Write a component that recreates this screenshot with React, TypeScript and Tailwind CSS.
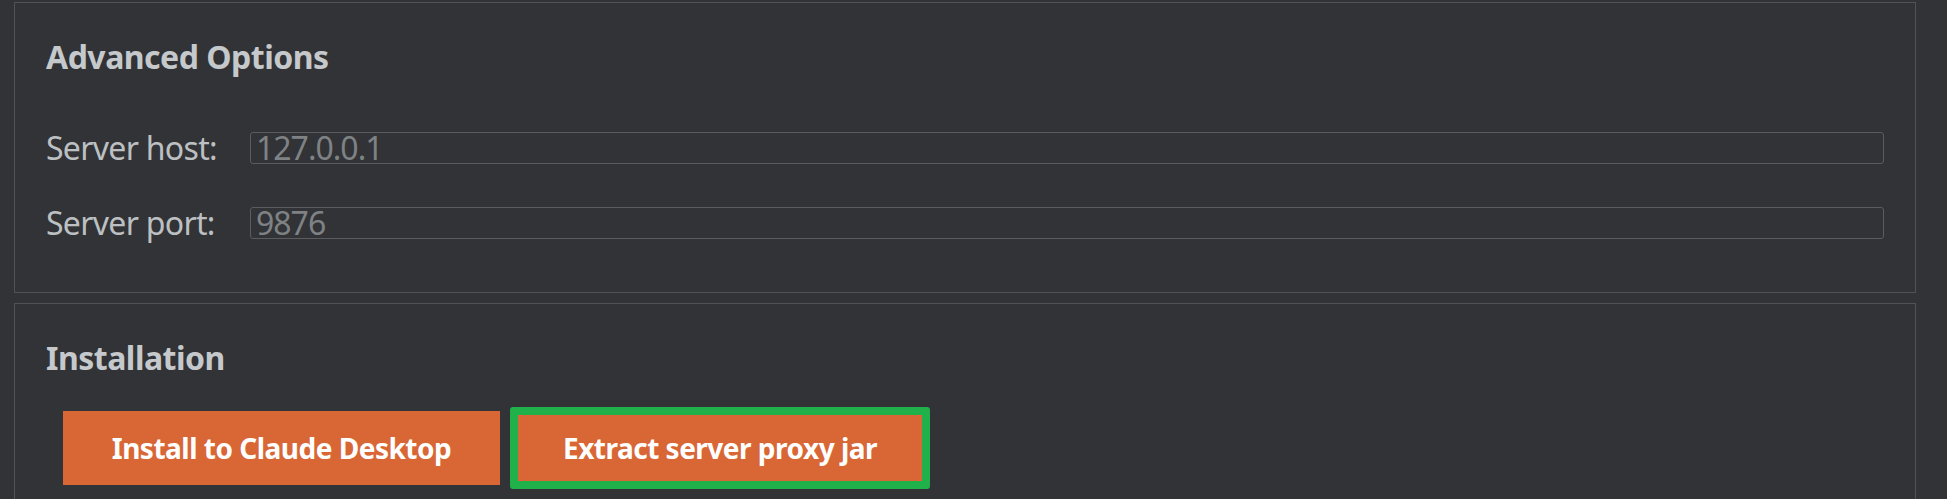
const font = { fontFamily: '"Noto Sans", "Noto Sans CJK KR", sans-serif' }

function Field({ label, value }: { label: string; value: string }) {
  return (
    <div className="flex h-[32px] items-center">
      <div className="w-[204px] shrink-0 text-[32px] leading-[32px] tracking-[-0.7px] text-[#bdc0c3]">{label}</div>
      <div className="flex h-[32px] flex-1 items-center rounded-[3px] border border-[#5a5c5f] pl-[5px] text-[32px] leading-[32px] tracking-[-1px] text-[#7f8285]">
        {value}
      </div>
    </div>
  )
}

export default function App() {
  return (
    <div className="h-[499px] w-[1947px] overflow-hidden bg-[#323336] pl-[14px] pt-[2px]" style={font}>
      {/* Advanced options */}
      <section className="h-[291px] w-[1902px] border border-[#505255] px-[31px]">
        <h2 className="mt-[38px] text-[32px] font-bold leading-[32px] tracking-[-0.5px] text-[#c6c9cc]">Advanced Options</h2>
        <div className="mt-[59px] flex flex-col gap-[43px]">
          <Field label="Server host:" value="127.0.0.1" />
          <Field label="Server port:" value="9876" />
        </div>
      </section>

      {/* Installation */}
      <section className="mt-[10px] h-[300px] w-[1902px] border border-[#505255] px-[31px]">
        <h2 className="mt-[38px] text-[32px] font-bold leading-[32px] tracking-[-0.5px] text-[#c6c9cc]">Installation</h2>
        <div className="ml-[17px] mt-[33px] flex items-center gap-[10px]">
          <button className="h-[74px] w-[437px] bg-[#d86735] text-[28px] font-bold tracking-[-0.5px] text-white">
            Install to Claude Desktop
          </button>
          <button className="h-[82px] w-[420px] rounded-[3px] border-[8px] border-[#21b14b] bg-[#d86735] text-[28px] font-bold tracking-[-0.5px] text-white">
            Extract server proxy jar
          </button>
        </div>
      </section>
    </div>
  )
}
